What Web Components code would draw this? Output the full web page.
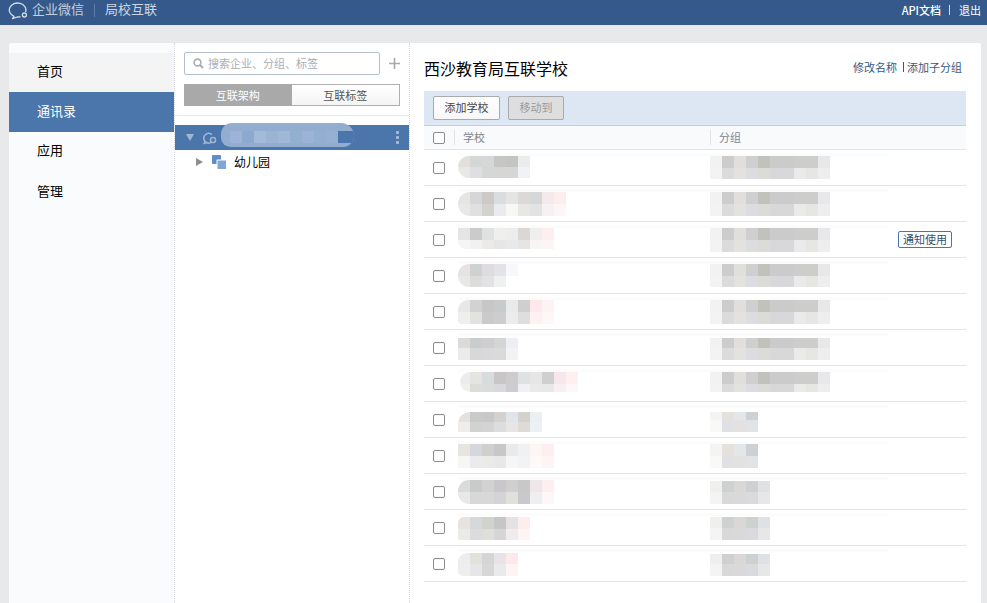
<!DOCTYPE html>
<html lang="zh">
<head>
<meta charset="utf-8">
<title>局校互联</title>
<style>
html,body{margin:0;padding:0;background:#e8e9eb;overflow:hidden}
body{font-family:"Noto Sans CJK SC","Liberation Sans",sans-serif;font-size:12px;color:#000}
</style>
</head>
<body>
<app-shell>
  <top-bar slot="top"></top-bar>
  <side-nav slot="nav">
    <nav-item first>首页</nav-item>
    <nav-item active>通讯录</nav-item>
    <nav-item class="up">应用</nav-item>
    <nav-item>管理</nav-item>
  </side-nav>
  <tree-panel slot="tree"></tree-panel>
  <school-pane slot="main"></school-pane>
</app-shell>
<script>
function def(name,html,init){
  customElements.define(name,class extends HTMLElement{
    constructor(){super();this.attachShadow({mode:'open'}).innerHTML=html;}
    connectedCallback(){if(init&&!this._d){this._d=1;init.call(this,this.shadowRoot);}}
  });
}
const BUBBLE=(c,w)=>`<path d="M17.7 11.6A8.3 7 0 1 0 6 16.3L4.6 18.6L9.2 17L12.2 16.8" fill="none" stroke="${c}" stroke-width="${w}" stroke-linejoin="round" stroke-linecap="round"/><circle cx="16.4" cy="15" r="2" fill="none" stroke="${c}" stroke-width="${w}"/>`;

def('app-shell',`<style>
:host{display:flex;flex-direction:column;height:603px;overflow:hidden;background:#e8e9eb}
.wrap{flex:1;min-height:0;padding:18px 6px 0 9px}
.card{display:flex;height:100%;background:#fff;border-radius:3px 3px 0 0;overflow:hidden}
</style><slot name="top"></slot><div class="wrap"><div class="card"><slot name="nav"></slot><slot name="tree"></slot><slot name="main"></slot></div></div>`);

def('top-bar',`<style>
:host{display:flex;align-items:center;height:25px;background:#34598a;color:#cdd6e2;font-size:13px;flex:none;padding-bottom:5px;box-sizing:border-box}
svg{display:block;margin-left:8px;flex:none}
.wx{width:51px;white-space:nowrap;color:#c6d0de;margin-bottom:3px}
.sys{margin-bottom:3px}
.sep{width:1px;height:13px;background:#5f7ea6;margin:0 10px 0 11px}
.r{margin-left:auto;display:flex;align-items:center;color:#fff;font-size:11px;padding-right:6px}
.r i{width:1px;height:10px;background:#e6dcc0;margin:0 9px 0 8px}
.r b{font-weight:500}
</style><svg width="24" height="20" viewBox="0 0 24 20">${BUBBLE('#d3dce8',1.3)}</svg><span class="wx">企业微信</span><span class="sep"></span><span class="sys">局校互联</span><div class="r"><b>API文档</b><i></i><span>退出</span></div>`);

def('side-nav',`<style>
:host{display:block;width:166px;flex:none;background:#fafbfd;padding-top:10px;box-sizing:border-box;border-right:1px dotted #d5d9de;height:100%}
</style><slot></slot>`);

def('nav-item',`<style>
:host{display:flex;align-items:center;height:40px;box-sizing:border-box;padding:0 0 3px 28px;font-size:13px;color:#000}
:host(.up){padding-bottom:5px}
:host([first]){background:#f4f4f4;height:39px;padding-bottom:4px}
:host([active]){background:#4a76ab;color:#fff}
</style><slot></slot>`);

def('mosaic-blur',`<style>
:host{display:inline-block;overflow:hidden;vertical-align:top}
.g{display:grid}
</style><div class="g"></div>`,function(r){
  const t=(this.getAttribute('t')||'').split(' ').filter(Boolean),b=(this.getAttribute('b')||'').split(' ').filter(Boolean);
  const h1=+this.getAttribute('h1')||11,h2=+this.getAttribute('h2')||11,first=+this.getAttribute('first')||12;
  const rad=this.getAttribute('rad');if(rad)this.style.borderRadius=rad;
  const g=r.querySelector('.g');
  g.style.gridTemplateColumns=`${first}px repeat(${t.length-1},12px)`;
  g.style.gridTemplateRows=`${h1}px ${h2}px`;
  let s='';for(const c of t)s+=`<div style="background:${c==='-'?'transparent':c}"></div>`;
  for(let i=0;i<t.length;i++){const c=b[i]||'-';s+=`<div style="background:${c==='-'?'transparent':c}"></div>`;}
  g.innerHTML=s;
});

def('tree-panel',`<style>
:host{display:block;width:235px;flex:none;box-sizing:border-box;border-right:1px dotted #d5d9de;height:100%;padding-top:9px;background:#fff;font-size:11px}
.top{display:flex;align-items:center;padding-left:9px}
.search{display:flex;align-items:center;width:196px;height:23px;box-sizing:border-box;border:1px solid #b4bfcb;border-radius:2px;color:#a9aeb5;padding:0 0 1px 8px;white-space:nowrap}
.search svg{margin-right:4px;flex:none}
.plus{margin-left:9px;display:block}
.tabs{display:flex;margin:9px 0 0 9px;width:216px;height:22px;box-sizing:border-box}
.tabs div{flex:1;display:flex;align-items:center;justify-content:center;box-sizing:border-box;padding-bottom:1px}
.on{background:#a9a9a9;color:#fff}
.off{border:1px solid #b0b0b0;border-left:0;background:linear-gradient(#fff,#f4f4f4);color:#555}
.div{height:1px;background:#e6e8ea;margin-top:9px}
.sel{position:relative;display:flex;align-items:center;height:25px;margin-top:9px;background:#4a76ab}
.sel .tri{margin-left:11px;display:block}
.sel .ic{margin-left:8px;display:block}
.pill{position:absolute;left:46px;top:-2px;width:133px;height:24px;background:#92add0;border-radius:12px 14px 12px 10px;overflow:hidden}
.pill mosaic-blur{position:absolute;left:9px;top:8px}
.pill .end{position:absolute;left:117px;top:8px;width:16px;height:12px;background:#4a76ab}
.dots{margin-left:auto;margin-right:10px;display:block}
.child{display:flex;align-items:center;height:24px;font-size:12px;color:#000}
.child .tri{margin-left:21px;display:block}
.child .ic{margin-left:9px;display:block}
.child span{margin:0 0 2px 8px}
</style>
<div class="top">
  <div class="search"><svg width="11" height="11" viewBox="0 0 11 11"><circle cx="4.5" cy="4.5" r="3.4" fill="none" stroke="#a9aeb5" stroke-width="1.6"/><path d="M7 7l3 3" stroke="#a9aeb5" stroke-width="2"/></svg><span>搜索企业、分组、标签</span></div>
  <svg class="plus" width="11" height="11" viewBox="0 0 11 11"><path d="M0 5.5h11M5.5 0v11" stroke="#a8a8a8" stroke-width="1.6"/></svg>
</div>
<div class="tabs"><div class="on">互联架构</div><div class="off">互联标签</div></div>
<div class="div"></div>
<div class="sel">
  <svg class="tri" width="8" height="7" viewBox="0 0 8 7"><path d="M0 0h8L4 7z" fill="#a0b7d4"/></svg>
  <svg class="ic" width="15" height="14" viewBox="0 0 15 14"><path d="M9.6 11A4.8 4.8 0 1 1 9.4 3.2" fill="none" stroke="#a0b7d4" stroke-width="1.5" stroke-linecap="round"/><path d="M3 10.5L2 12.5L5 11.6" fill="none" stroke="#a0b7d4" stroke-width="1.3"/><circle cx="11" cy="9" r="2.6" fill="none" stroke="#a0b7d4" stroke-width="1.5"/></svg>
  <div class="pill"><mosaic-blur t="#9db4d6 #8ea9cf #a3bad9 #9bb4d4 #a0b7d6 #92afcf #9ab3d6 #93afd0 #95b0d2 #6387b6" b="#9db4d6 #8ea9cf #a3bad9 #9bb4d4 #a0b7d6 #92afcf #9ab3d6 #93afd0 #95b0d2 #6387b6" h1="6" h2="6"></mosaic-blur><div class="end"></div></div>
  <svg class="dots" width="3" height="13" viewBox="0 0 3 13"><g fill="#a7bcd6"><rect y="0" width="3" height="3" rx="1"/><rect y="5" width="3" height="3" rx="1"/><rect y="10" width="3" height="3" rx="1"/></g></svg>
</div>
<div class="child">
  <svg class="tri" width="7" height="8" viewBox="0 0 7 8"><path d="M0 0l7 4-7 4z" fill="#8e8e8e"/></svg>
  <svg class="ic" width="14" height="14" viewBox="0 0 14 14"><rect x="0" y="0" width="9" height="9" rx="1" fill="#5f8dc6"/><rect x="4.5" y="4.5" width="9.5" height="9.5" rx=".5" fill="#fff"/><rect x="5.5" y="5.5" width="8.5" height="8.5" fill="#7fa6d4"/></svg>
  <span>幼儿园</span>
</div>`);

def('check-box',`<style>
:host{display:block;width:12px;height:12px;box-sizing:border-box;border:1px solid #8c8c8c;border-radius:2px;background:#fff}
</style>`);

def('tool-button',`<style>
:host{display:flex;align-items:center;justify-content:center;box-sizing:border-box;height:24px;padding-bottom:1px;border:1px solid #a8abae;border-radius:2px;font-size:11px;background:linear-gradient(#fff,#f7f7f7);color:#444}
:host([disabled]){background:#dedede;color:#9a9a9a}
</style><slot></slot>`);

def('notify-button',`<style>
:host{display:flex;align-items:center;justify-content:center;box-sizing:border-box;align-self:center;margin-right:14px;width:54px;height:17px;padding-bottom:1px;border:1px solid #4a76ab;border-radius:2px;font-size:11px;color:#33506f;background:#fff}
</style><slot></slot>`);

def('school-row',`<style>
:host{display:grid;grid-template-columns:30px 256px 1fr;height:36px;box-sizing:border-box;border-bottom:1px solid #e3e4e6;background:linear-gradient(#fcfcfc,#fcfcfc) no-repeat 34px 3px/430px 3px}
.c{display:flex;align-items:center;padding-left:9px}
.s{padding-left:4px}
.g{display:flex;justify-content:space-between}
</style><div class="c"><check-box></check-box></div><div class="s"><slot name="school"></slot></div><div class="g"><slot name="group"></slot><slot name="action"></slot></div>`);

const L=['#f3f2f2 #cccccc #e0dfdb #cfcfd0 #c2c2bc #cbcbcb #cbcbcc #cdcdcb #cdcdcb #e8e8ea','#f4f3f3 #dbdbdb #e3e2df #dcdde0 #dbdbd7 #d8d8da #d8d8da #e9eae9 #e6e7e3 #eeeeef'];
const M=['#f5f4f2 #e5e2de #e4e7e7 #cdd0d5','#f9f9f7 #dfe1e4 #e4e2e0 #e1e3e6'];
const S5=['#efefee #cfd0d1 #d9d8d7 #cdd1d0 #dfe1e4','#f5f4f4 #d8d8d8 #d9d9d9 #d8dadd #e7e7e8'];
const ROWS=[
 {dy:6,h:[11,11],rad:'11px 0 0 11px',t:'#e2dfdc #d5d6d6 #d6d7d7 #c6c6c6 #c4c4c0 #ebecee',b:'#e8e8e6 #dfdfe1 #d6d6d6 #d6d6d6 #d6d6d6 #f1f2f6',g:L,gd:6,gh:[12,11]},
 {dy:6,h:[12,12],rad:'12px 0 0 12px',t:'#e6e5e3 #d6d6d7 #cdc9c9 #d9dde0 #e4e4e2 #dcd8d6 #d5d7d9 #f4e9eb #fdeeee',b:'#e8e8e6 #e0e0e3 #d3d2cf #eaebef #f7f7f5 #e8e7e5 #e4e3e4 #f6f2f4 #fdf6f6',g:L,gd:6,gh:[12,12]},
 {dy:6,h:[12,9],rad:'0 0 0 8px',t:'#e6e5e4 #cbcbcc #e0e2e1 #efefed #eceeee #dad7d4 #f1eef0 #fdeef0',b:'#f5f5f5 #f1f1f1 #ebeae9 #e6e6e6 #e8e9ea #e6e5e3 #f8f5f5 #fdf5f5',g:L,gd:6,gh:[12,12],act:1},
 {dy:6,h:[12,11],rad:'11px 0 0 11px',t:'#e6e3e2 #cfd2d1 #dedcde #e4e2e6 #f7f8fb',b:'#e8e8e6 #dcdcdc #e2e2e4 #eff1f1 -',g:L,gd:6,gh:[12,11]},
 {dy:6,h:[12,12],rad:'10px 0 0 4px',t:'#e8e8e8 #d3d2d3 #c8c6c6 #c9cacb #e9ebea #d0cfce #fde9eb #fdf3f3',b:'#efefef #e2e2de #cbcaca #cdcdcf #ececec #dededf #fdf1f1 #fdf7f7',g:L,gd:6,gh:[12,12]},
 {dy:8,h:[10,12],rad:'',t:'#dadad8 #c9cdcd #cfcdcf #d4d6d4 #eeeff5',b:'#ebebe9 #d8d8d8 #d9d9dc #d9dbda #f3f3f5',g:L,gd:8,gh:[10,12]},
 {dy:6,h:[12,8],rad:'10px 0 0 10px',first:10,ml:2,t:'#ebecec #e4e4e0 #d9dcdd #c8c6c7 #ccccce #dfe2e3 #e6e6e6 #cfcfcf #f6e8ea #fdf0ef',b:'#f0f0f0 #dcdcd8 #d9dbdc #d9d9dc #cdcdcf #f0f1f3 #e8e9e8 #e8e8e9 #f7f0f2 #fdf7f7',g:L,gd:6,gh:[12,8]},
 {dy:10,h:[10,10],rad:'12px 0 0 0',t:'#e5e1de #c8cbca #c7c9c8 #d5d2ce #e1e4e8 #d4d2cd #ebeff2',b:'#efeeed #d2d2d1 #d3d4d3 #dcddde #e7e6e4 #dcdbd6 #eef1f4',g:M,gd:10,gh:[8,12]},
 {dy:6,h:[12,12],rad:'',t:'#e8e4e0 #d6d7dc #cfcfcc #c7c7c8 #e9eaea #f0f1f3 #fef5f5 #fdeff0',b:'#f6f6f4 #ebebee #eaeae8 #e8e8e8 #f6f6f6 #f2f3f5 #fef8f8 #fef4f5',g:M,gd:6,gh:[12,12]},
 {dy:6,h:[12,12],rad:'11px 0 0 11px',t:'#dcdbdb #c8cbca #d2d2d2 #c9c7c9 #d0cfcf #c8c8c9 #eee6e9 #fdeff0',b:'#e8e8e8 #d8d8d9 #d8d8d9 #d4d4d7 #e0e0dd #c9c8cb #efeef0 #fdf7f8',g:S5,gd:7,gh:[11,12]},
 {dy:7,h:[12,11],rad:'6px 0 0 2px',t:'#e6e3e0 #d6d8dc #d1d3cd #c6c6c7 #e6e1e5 #fdeeee',b:'#ebeae6 #dcdcdf #dfdedb #d6d6d4 #f0eced #fdf5f4',g:S5,gd:7,gh:[11,12]},
 {dy:7,h:[11,12],rad:'9px 0 0 5px',t:'#ededed #e2e2dc #d5d5d6 #e7e3e6 #fde9eb',b:'#eeeeee #e6e5e8 #d7d7d7 #e9eaea #fdf5f5',g:S5,gd:8,gh:[10,12]}
];

def('school-pane',`<style>
:host{display:block;flex:1;min-width:0;height:100%;background:#fff;padding:0 15px 0 14px;box-sizing:border-box}
.head{display:flex;align-items:center;height:48px}
h1{margin:0;font-size:16px;font-weight:400;color:#000;position:relative;top:1px}
.links{margin-left:auto;display:flex;align-items:center;font-size:11px;color:#34597f;padding-right:4px}
.links i{width:1px;height:10px;background:#2f5a88;margin:0 3px 0 6px}
.bar{display:flex;align-items:center;gap:8px;height:35px;box-sizing:border-box;padding:0 0 1px 9px;background:#dde7f3;border-bottom:1px solid #c3ced9}
.b1{width:67px}.b2{width:56px}
.th{display:grid;grid-template-columns:30px 256px 1fr;height:24px;box-sizing:border-box;background:#f9fafc;border-bottom:1px solid #e3e4e6;font-size:11px;color:#80858c}
.th>div{display:flex;align-items:center}
.th .c{padding-left:9px}
.th .t{position:relative;padding:0 0 2px 9px}
.th .t::before{content:"";position:absolute;left:0;top:4px;bottom:4px;width:1px;background:#e2e4e7}
</style>
<div class="head"><h1>西沙教育局互联学校</h1><div class="links"><span>修改名称</span><i></i><span>添加子分组</span></div></div>
<div class="bar"><tool-button class="b1">添加学校</tool-button><tool-button class="b2" disabled>移动到</tool-button></div>
<div class="th"><div class="c"><check-box></check-box></div><div class="t">学校</div><div class="t">分组</div></div>
<div id="rows"></div>`,function(r){
  const box=r.getElementById('rows');
  for(const d of ROWS){
    const row=document.createElement('school-row');
    const a=document.createElement('mosaic-blur');
    a.slot='school';
    a.setAttribute('t',d.t);a.setAttribute('b',d.b);a.setAttribute('h1',d.h[0]);a.setAttribute('h2',d.h[1]);
    if(d.first)a.setAttribute('first',d.first);
    if(d.rad)a.setAttribute('rad',d.rad);
    a.style.marginTop=d.dy+'px';
    if(d.ml)a.style.marginLeft=d.ml+'px';
    const g=document.createElement('mosaic-blur');
    g.slot='group';
    g.setAttribute('t',d.g[0]);g.setAttribute('b',d.g[1]);g.setAttribute('h1',d.gh[0]);g.setAttribute('h2',d.gh[1]);
    g.style.marginTop=d.gd+'px';
    row.append(a,g);
    if(d.act){const s=document.createElement('notify-button');s.slot='action';s.textContent='通知使用';row.append(s);}
    box.append(row);
  }
});
</script>
</body>
</html>
